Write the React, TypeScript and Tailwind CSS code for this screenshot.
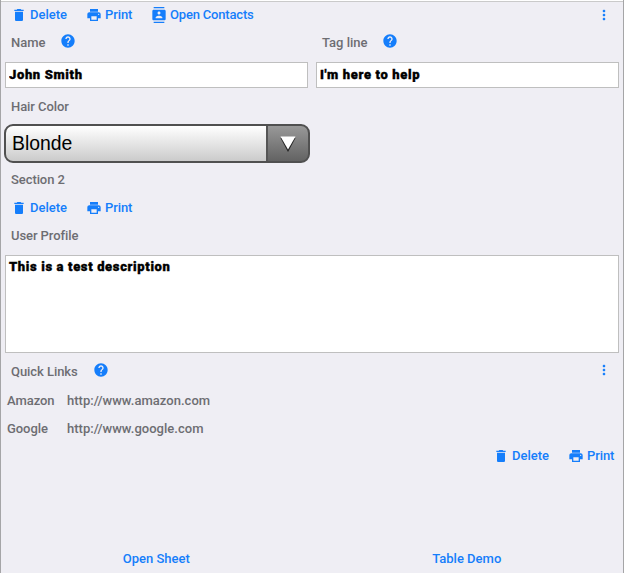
import type { ReactNode } from "react";
import { MdContacts, MdDelete, MdHelp, MdMoreVert, MdPrint } from "react-icons/md";

function Command({ icon, label, className = "" }: { icon: ReactNode; label: string; className?: string }) {
  return (
    <button className={`flex shrink-0 items-center gap-[3px] whitespace-nowrap text-left font-medium text-[#157efb] ${className}`}>
      {icon}
      <span>{label}</span>
    </button>
  );
}

function DeletePrint() {
  return (
    <>
      <Command icon={<MdDelete size={16} />} label="Delete" className="w-[75px]" />
      <Command icon={<MdPrint size={16} />} label="Print" className="w-[65px] tracking-[-0.08px]" />
    </>
  );
}

function Label({ text, help = "" }: { text: string; help?: string }) {
  return (
    <div className="flex h-7 items-center pl-2.5">
      <span className={help || "tracking-[-0.08px]"}>{text}</span>
      {help && <MdHelp size={16} className="-mt-1 text-[#157efb]" />}
    </div>
  );
}

const field = "border border-[#bfbfbf] bg-white px-[3px] font-black tracking-[0.64px] text-black outline-none [-webkit-text-stroke:0.35px_black]";

const links = [
  ["Amazon", "http://www.amazon.com"],
  ["Google", "http://www.google.com"],
];

// Fragments of the page behind the sheet that show along its left edge.
const marks = [
  [0, 4], [14, 4], [29, 1], [98, 4], [303, 4], [369, 7], [387, 1], [390, 1], [421, 5], [522, 7],
];

export default function App() {
  return (
    <main className="relative flex h-[573px] w-[624px] flex-col overflow-hidden border-x border-[#a5a5a7] bg-[#efeef4] font-['Roboto',sans-serif] text-[13px] font-medium leading-4 text-[#6d6d72]">
      <div className="h-0.5 shrink-0 border-b border-[#cacaca] bg-white" />
      <div className="flex h-[26px] items-center pl-2.5">
        <DeletePrint />
        <Command icon={<MdContacts size={16} />} label="Open Contacts" className="tracking-[-0.18px]" />
        <MdMoreVert size={16} className="ml-auto mr-[11px] text-[#157efb]" />
      </div>

      <div className="grid grid-cols-[303px_303px] gap-x-2 pl-1">
        <div>
          <div className="-ml-1 pt-px">
            <Label text="Name" help="w-[49px]" />
          </div>
          <input defaultValue="John Smith" className={`mt-[5px] block h-[26px] w-full pb-0.5 ${field}`} />
        </div>
        <div>
          <div className="-ml-1 pt-px">
            <Label text="Tag line" help="w-[60px]" />
          </div>
          <input defaultValue="I'm here to help" className={`mt-[5px] block h-[26px] w-full pb-0.5 ${field}`} />
        </div>
      </div>

      <div className="mt-[5px]">
        <Label text="Hair Color" />
      </div>
      <button className="ml-[3px] mt-[3px] flex h-[39px] w-[306px] shrink-0 overflow-hidden rounded-[9px] border-2 border-[#505050] bg-[#505050] text-left">
        <span className="flex h-full w-[260px] items-center bg-linear-to-b from-white to-[#cbcbcb] pb-0.5 pl-1.5 font-['Liberation_Sans',sans-serif] text-[19.4px] font-normal text-black">
          Blonde
        </span>
        <span className="flex h-full flex-1 items-center justify-center border-l-2 border-[#555] bg-linear-to-b from-[#999] to-[#636363]">
          <svg width="18" height="18" viewBox="0 0 18 18">
            <path d="M1.5 3h15L9 17z" fill="#222" />
            <path d="M1.5 1.5h15L9 14.5z" fill="white" />
          </svg>
        </span>
      </button>

      <div className="mt-[3px]">
        <Label text="Section 2" />
      </div>
      <div className="flex h-7 items-center pl-2.5">
        <DeletePrint />
      </div>
      <Label text="User Profile" />
      <textarea defaultValue="This is a test description" className={`ml-1 mt-[5px] block h-[98px] w-[614px] shrink-0 resize-none py-[3px] ${field}`} />

      <div className="mt-[5px] flex items-center">
        <Label text="Quick Links" help="w-[82px] tracking-[-0.06px]" />
        <MdMoreVert size={16} className="-mt-1 ml-auto mr-[11px] text-[#157efb]" />
      </div>
      <div className="mt-px pl-1.5">
        {links.map(([name, url]) => (
          <div key={name} className="flex h-7 items-center">
            <span className="w-[60px] tracking-[-0.06px]">{name}</span>
            <span className="tracking-[0.03px]">{url}</span>
          </div>
        ))}
      </div>
      <div className="-mt-px flex h-7 items-center pl-[492px]">
        <DeletePrint />
      </div>

      <footer className="mt-auto grid h-[29px] grid-cols-2 items-center pr-px text-[#157efb]">
        <button>Open Sheet</button>
        <button>Table Demo</button>
      </footer>

      {marks.map(([top, height]) => (
        <i key={top} className="absolute -left-px w-px bg-[#171717]" style={{ top, height }} />
      ))}
    </main>
  );
}
